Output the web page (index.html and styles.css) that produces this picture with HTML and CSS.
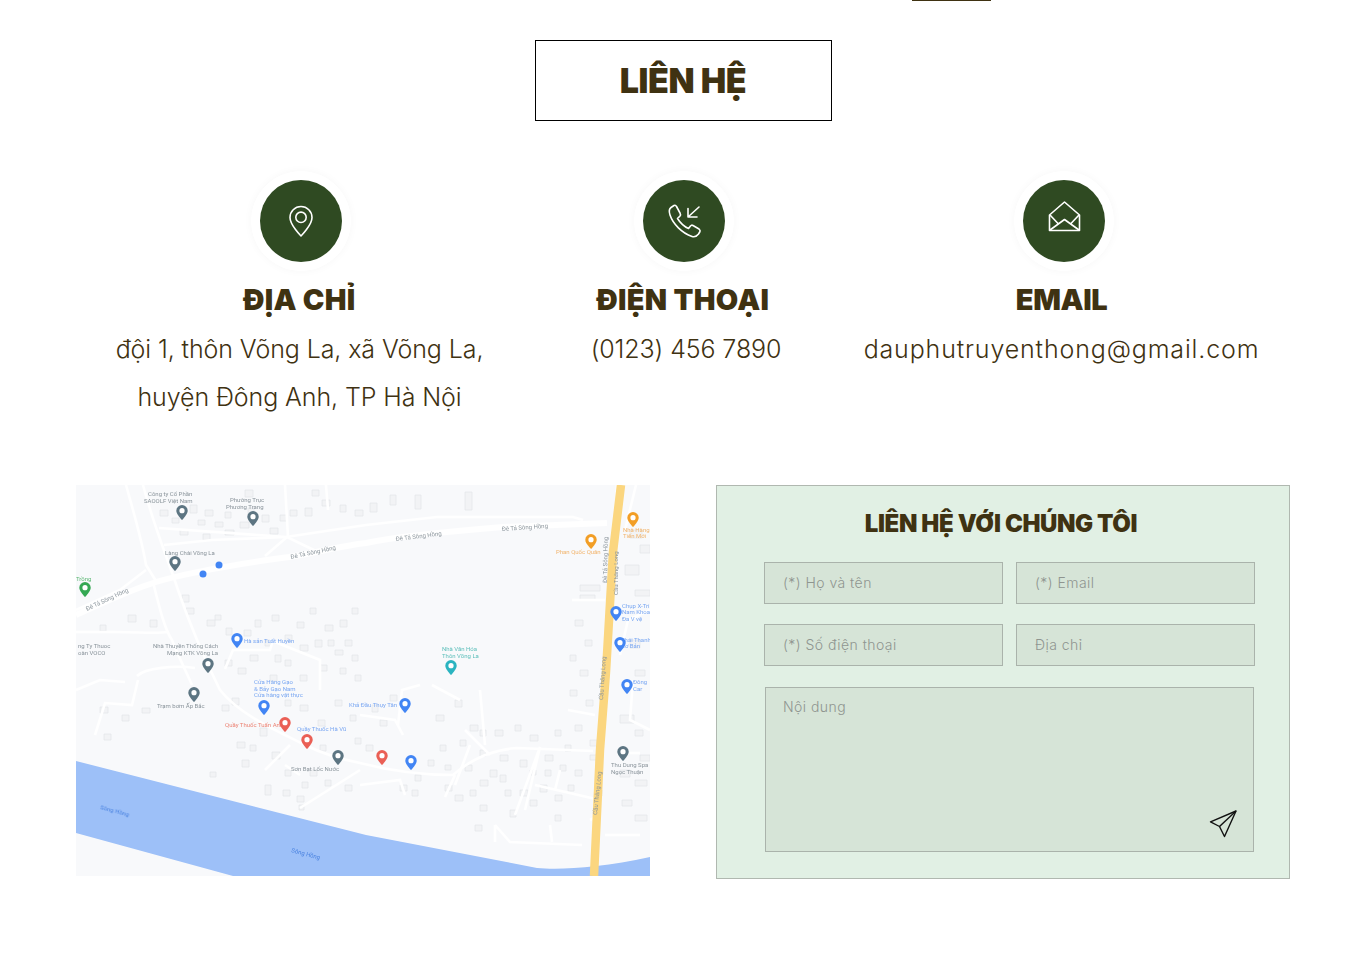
FILE: index.html
```html
<!DOCTYPE html>
<html lang="vi">
<head>
<meta charset="utf-8">
<title>Liên hệ</title>
<link rel="stylesheet" href="styles.css">
</head>
<body>
<div class="nav-line"></div>
<main class="contact">
  <h1 class="page-title">LIÊN HỆ</h1>
  <section class="info-grid">
    <article class="info info-address">
      <div class="badge">
        <svg viewBox="0 0 82 82" class="badge-svg"><circle cx="41" cy="41" r="41" fill="#2f4a22"/><g fill="none" stroke="#fff" stroke-width="1.6" stroke-linejoin="round"><path d="M41 56C41 56 30 45 30 37.5a11 11 0 0 1 22 0C52 45 41 56 41 56Z"/><circle cx="41" cy="37.3" r="5.2"/></g></svg>
      </div>
      <h2>ĐỊA CHỈ</h2>
      <p class="text-address">đội 1, thôn Võng La, xã Võng La,<br>huyện Đông Anh, TP Hà Nội</p>
    </article>
    <article class="info info-phone">
      <div class="badge">
        <svg viewBox="0 0 82 82" class="badge-svg"><circle cx="41" cy="41" r="41" fill="#2f4a22"/><g fill="none" stroke="#fff" stroke-width="1.6" stroke-linejoin="round" stroke-linecap="round"><path d="M31 25.5L28 27.5C26 29 26 32 27 35C30 44 39 53 49 56.5C52 57.5 54 56 55.5 54L57 51.5C57.5 50.5 57 50 56 49L50 45.5C49 45 48 45 47.5 46L45.5 48.5C41 46.5 37 42.5 34.5 38.5L37 36C37.8 35 37.8 34.5 37 33L33.5 26.5C33 25.5 32 25 31 25.5Z"/><path d="M56 27L45 37M45 28.5V37H54"/></g></svg>
      </div>
      <h2>ĐIỆN THOẠI</h2>
      <p class="text-phone">(0123) 456 7890</p>
    </article>
    <article class="info info-email">
      <div class="badge">
        <svg viewBox="0 0 82 82" class="badge-svg"><circle cx="41" cy="41" r="41" fill="#2f4a22"/><g fill="none" stroke="#fff" stroke-width="1.6" stroke-linejoin="round"><path d="M26.5 35L41.5 22L56.5 35V50.5H26.5Z"/><path d="M27 50L41.5 39.5L56 50M27 35L35 43.500M56 35L48 43.500"/></g></svg>
      </div>
      <h2 class="title-email">EMAIL</h2>
      <p class="text-email">dauphutruyenthong@gmail.com</p>
    </article>
  </section>

  <section class="bottom-grid">
    <svg class="map" viewBox="76 485 574 391" role="img" aria-label="Bản đồ Võng La">
      <defs>
        <filter id="soft" x="-5%" y="-5%" width="110%" height="110%"><feGaussianBlur stdDeviation="0.7"/></filter>
        <filter id="softer" x="-5%" y="-5%" width="110%" height="110%"><feGaussianBlur stdDeviation="0.5"/></filter>
        <symbol id="pin" viewBox="0 0 12 15" overflow="visible"><path d="M6 15C6 15 .3 9.500 .3 5.700a5.700 5.700 0 0 1 11.400 0C11.700 9.500 6 15 6 15Z" fill="currentColor"/><circle cx="6" cy="5.700" r="2.600" fill="#fff"/></symbol>
      </defs>
      <rect x="76" y="485" width="574" height="391" fill="#f8f9fb"/>
      <g filter="url(#soft)">
        <path class="block" d="M160 510h8v6h-8zM172 518h7v5h-7zM190 505h7v8h-7zM205 510h8v6h-8zM225 512h6v6h-6zM240 522h9v6h-9zM262 515h7v7h-7zM270 528h8v6h-8zM225 530h9v5h-9zM180 530h8v5h-8zM203 534h7v6h-7zM290 510h7v6h-7zM305 508h7v8h-7zM322 500h8v6h-8zM340 505h6v7h-6zM355 510h8v6h-8zM370 503h7v9h-7zM390 495h6v10h-6zM415 495h6v14h-6zM465 492h7v18h-7zM245 490h8v7h-8zM312 490h7v6h-7zM198 520h7v5h-7zM215 522h8v5h-8zM248 508h6v6h-6zM280 515h7v6h-7z"/>
        <path class="block" d="M182 595h7v7h-7zM186 608h8v6h-8zM207 620h8v6h-8zM215 615h6v5h-6zM226 628h6v7h-6zM244 630h7v6h-7zM255 620h6v7h-6zM272 615h7v6h-7zM297 622h7v6h-7zM310 608h6v6h-6zM325 625h8v6h-8zM340 620h7v7h-7zM352 608h6v6h-6zM250 655h8v6h-8zM275 655h6v7h-6zM300 645h8v6h-8zM315 640h7v7h-7zM335 650h8v5h-8zM352 655h6v6h-6zM225 660h7v6h-7zM238 668h8v6h-8zM128 615h8v7h-8zM150 620h7v7h-7zM100 625h6v6h-6zM285 635h7v6h-7zM265 640h6v6h-6zM328 640h6v6h-6zM345 640h7v6h-7zM285 660h6v6h-6zM320 665h7v6h-7zM340 668h6v6h-6zM300 675h7v6h-7zM355 675h6v6h-6zM270 675h7v6h-7z"/>
        <path class="block" d="M222 705h7v6h-7zM232 698h7v7h-7zM260 728h7v8h-7zM237 742h8v6h-8zM242 760h7v7h-7zM272 752h8v7h-8zM302 782h6v6h-6zM265 785h6v10h-6zM283 790h7v6h-7zM297 796h7v6h-7zM299 805h5v5h-5zM210 772h6v5h-6zM100 707h8v6h-8zM122 715h7v6h-7zM142 708h8v5h-8zM104 734h7v6h-7zM300 705h8v6h-8zM318 720h7v6h-7zM335 700h7v6h-7zM355 738h6v6h-6zM250 745h6v6h-6zM285 770h6v6h-6zM310 770h7v6h-7zM325 780h6v6h-6zM345 785h7v6h-7zM350 715h6v6h-6zM320 745h6v6h-6zM285 700h6v6h-6z"/>
        <path class="block" d="M366 745h7v6h-7zM380 720h7v6h-7zM372 705h6v7h-6zM390 695h7v6h-7zM436 715h8v6h-8zM455 700h7v7h-7zM470 725h8v6h-8zM495 730h8v6h-8zM515 725h6v6h-6zM530 735h8v6h-8zM555 730h6v6h-6zM575 725h7v6h-7zM590 740h7v6h-7zM500 755h8v6h-8zM520 760h7v7h-7zM545 755h8v6h-8zM560 765h6v6h-6zM590 755h8v5h-8zM465 765h7v6h-7zM480 780h8v6h-8zM490 770h7v7h-7zM445 785h7v6h-7zM455 795h8v6h-8zM500 775h6v7h-6zM520 790h8v6h-8zM540 785h7v7h-7zM555 795h7v6h-7zM575 770h7v6h-7zM595 790h7v6h-7zM400 785h7v6h-7zM480 805h7v6h-7zM510 810h6v7h-6zM475 825h7v6h-7zM555 815h6v6h-6zM530 800h7v6h-7zM412 790h6v6h-6zM586 700h7v6h-7zM570 690h7v6h-7zM580 670h8v6h-8zM570 655h6v6h-6zM585 640h7v6h-7zM575 620h8v6h-8zM580 585h20v6h-20zM580 595h15v5h-15zM545 770h6v6h-6zM530 770h6v5h-6zM505 790h6v6h-6zM568 785h6v6h-6zM480 730h6v6h-6zM480 750h6v6h-6zM460 740h6v6h-6zM440 745h6v6h-6zM428 760h6v6h-6zM445 765h6v5h-6zM415 775h6v6h-6zM470 790h6v6h-6zM565 745h6v6h-6z"/>
        <path class="block" d="M630 530h12v8h-12zM640 545h10v8h-10zM625 565h14v10h-14zM635 590h15v6h-15zM630 640h10v8h-10zM635 670h10v6h-10zM620 715h14v8h-14zM635 730h8v6h-8zM620 770h10v7h-10zM635 780h12v6h-12zM622 800h10v6h-10zM635 815h12v6h-12zM640 755h10v6h-10z"/>
        <g class="road-minor">
          <path d="M126 485C133 510 142 540 146 565L156 581"/>
          <path d="M143 485C155 530 170 565 178 590C190 625 205 660 220 690C240 715 275 730 305 745C325 755 345 760 360 763C395 772 430 775 453 775C470 760 490 750 517 748L593 751"/>
          <path d="M159 528L286 537"/>
          <path d="M164 545L212 540L286 537L366 525L437 517L573 517L583 520"/>
          <path d="M265 556L287 537L318 552"/>
          <path d="M285 485L288 537M326 485L328 510"/>
          <path d="M76 610L120 590L146 570"/>
          <path d="M153 582C160 610 165 630 172 640C180 660 190 680 192 685"/>
          <path d="M76 632H115C140 632 155 634 168 632"/>
          <path d="M137 676C145 668 175 665 195 668"/>
          <path d="M76 690L100 680L125 682"/>
          <path d="M95 735L105 703L132 705L138 680"/>
          <path d="M225 669L233 650L270 650L273 640"/>
          <path d="M270 640L320 660L320 690"/>
          <path d="M360 715L395 720L403 735"/>
          <path d="M420 685L402 690L398 725"/>
          <path d="M432 685L460 700"/>
          <path d="M445 797L455 775M515 815L540 747L525 810M470 745L455 785"/>
          <path d="M535 785L600 800M495 825L510 842L582 845M495 842V825M550 825L552 842"/>
          <path d="M555 790L560 770M590 820L600 815"/>
          <path d="M568 710L595 715M633 680L630 720L650 730M650 610L628 620L620 655M605 600H572"/>
          <path d="M300 808L360 770M360 785L400 780L405 795M265 770L290 745M285 765L300 775"/>
          <path d="M480 690L485 745M465 730L490 755"/>
          <path d="M617 485L612 600L602 690L596 790M636 485L625 530"/>
          <path d="M617 753H640M605 835H640"/>
        </g>
        <path class="road-main" d="M76 615C105 602 130 590 156 582C190 572 250 562 289 557C320 552 340 546 366 543C390 538 440 532 503 527L607 523"/>
        <path class="river" d="M76 761L366 835L537 868C560 870 600 868 650 857V876H233L76 833Z"/>
        <path class="highway" d="M621 485L613 552L606 672L600 750L594 876"/>
      </g>
      <g filter="url(#softer)">
        <g class="t-grey">
          <text x="148" y="496">Công ty Cổ Phần</text><text x="144" y="503">SAOOLF Việt Nam</text>
          <text x="230" y="502">Phường Trục</text><text x="226" y="509">Phương Trang</text>
          <text x="165" y="555">Làng Chài Võng La</text>
          <text x="153" y="648">Nhà Thuyền Thống Cách</text><text x="167" y="655">Mạng KTK Võng La</text>
          <text x="78" y="648">ng Ty Thuoc</text><text x="78" y="655">oàn VOCO</text>
          <text x="157" y="708">Trạm bơm Ấp Bắc</text>
          <text x="291" y="771">Sơn Bạt Lốc Nước</text>
          <text x="611" y="767">Thu Dung Spa</text><text x="611" y="774">Ngọc Thuận</text>
          <text transform="translate(87 611) rotate(-25)">Đê Tả Sông Hồng</text>
          <text transform="translate(291 559) rotate(-12)">Đê Tả Sông Hồng</text>
          <text transform="translate(396 541) rotate(-7)">Đê Tả Sông Hồng</text>
          <text transform="translate(502 531) rotate(-4)">Đê Tả Sông Hồng</text>
          <text transform="translate(607 583) rotate(-89)">Đê Tả Sông Hồng</text>
          <text transform="translate(603 700) rotate(-86)">Cầu Thăng Long</text>
          <text transform="translate(597 815) rotate(-84)">Cầu Thăng Long</text>
          <text transform="translate(618 595) rotate(-90)">Cầu Thăng Long</text>
        </g>
        <g class="t-blue">
          <text x="244" y="643">Hà sản Tuất Huyền</text>
          <text x="254" y="684">Cửa Hàng Gạo</text><text x="254" y="691">&amp; Bảy Gạo Nam</text><text x="254" y="697">Cửa hàng vật thực</text>
          <text x="349" y="707">Khả Đầu Thụy Tân</text>
          <text x="297" y="731">Quầy Thuốc Hà Vũ</text>
          <text x="622" y="608">Chụp X-Tri</text><text x="622" y="614">Nam Khoa</text><text x="622" y="621">Đa V vệ</text>
          <text x="621" y="642">Thái Thanh</text><text x="621" y="648">Cơ Bản</text>
          <text x="633" y="684">Đông</text><text x="633" y="691">Car</text>
        </g>
        <text class="t-red" x="225" y="727">Quầy Thuốc Tuấn Anh</text>
        <g class="t-orange"><text x="556" y="554">Phan Quốc Quân</text><text x="623" y="532">Nhà Hàng</text><text x="623" y="538">Tiến Mới</text></g>
        <g class="t-teal"><text x="442" y="651">Nhà Văn Hóa</text><text x="442" y="658">Thôn Võng La</text></g>
        <text class="t-green" x="76" y="581">Trồng</text>
        <g class="t-water">
          <text transform="translate(100 809) rotate(15)">Sông Hồng</text>
          <text transform="translate(291 852) rotate(15)">Sông Hồng</text>
        </g>
        <use href="#pin" x="176" y="505" width="12" height="15" class="p-grey"/>
        <use href="#pin" x="247" y="511" width="12" height="15" class="p-grey"/>
        <use href="#pin" x="169" y="556" width="12" height="15" class="p-grey"/>
        <use href="#pin" x="202" y="658" width="12" height="15" class="p-grey"/>
        <use href="#pin" x="188" y="687" width="12" height="15" class="p-grey"/>
        <use href="#pin" x="332" y="750" width="12" height="15" class="p-grey"/>
        <use href="#pin" x="617" y="746" width="12" height="15" class="p-grey"/>
        <use href="#pin" x="231" y="633" width="12" height="15" class="p-blue"/>
        <use href="#pin" x="258" y="700" width="12" height="15" class="p-blue"/>
        <use href="#pin" x="399" y="698" width="12" height="15" class="p-blue"/>
        <use href="#pin" x="405" y="755" width="12" height="15" class="p-blue"/>
        <use href="#pin" x="610" y="606" width="12" height="15" class="p-blue"/>
        <use href="#pin" x="614" y="637" width="12" height="15" class="p-blue"/>
        <use href="#pin" x="621" y="679" width="12" height="15" class="p-blue"/>
        <use href="#pin" x="279" y="717" width="12" height="15" class="p-red"/>
        <use href="#pin" x="301" y="734" width="12" height="15" class="p-red"/>
        <use href="#pin" x="376" y="750" width="12" height="15" class="p-red"/>
        <use href="#pin" x="627" y="512" width="12" height="15" class="p-orange"/>
        <use href="#pin" x="585" y="534" width="12" height="15" class="p-orange"/>
        <use href="#pin" x="445" y="660" width="12" height="15" class="p-teal"/>
        <use href="#pin" x="79" y="582" width="12" height="15" class="p-green"/>
        <circle cx="219" cy="565" r="3.500" fill="#4285f4"/>
        <circle cx="203" cy="574" r="3.500" fill="#4285f4"/>
      </g>
    </svg>

    <form class="contact-form">
      <h3>LIÊN HỆ VỚI CHÚNG TÔI</h3>
      <div class="fields">
        <input type="text" placeholder="(*) Họ và tên">
        <input type="text" placeholder="(*) Email">
        <input type="text" placeholder="(*) Số điện thoại">
        <input type="text" placeholder="Địa chỉ">
      </div>
      <div class="message">
        <textarea placeholder="Nội dung"></textarea>
        <button type="button" class="send" aria-label="Gửi">
          <svg viewBox="0 0 30 30" width="30" height="30" fill="none" stroke="#111" stroke-width="1.400" stroke-linejoin="round"><path d="M28 2L2.500 12.800L11.500 17.500L16.500 27.500Z"/><path d="M28 2L11.500 17.500"/></svg>
        </button>
      </div>
    </form>
  </section>
</main>
</body>
</html>
```

FILE: styles.css
```css
* { box-sizing: border-box; }
html, body { margin: 0; padding: 0; background: #fff; }
body {
  font-family: "Inter", "Liberation Sans", sans-serif;
  color: #3f3212;
  min-height: 955px;
}
.nav-line {
  width: 79px;
  height: 1px;
  margin-left: 912px;
  background: #3f3212;
}
.contact {
  width: 1214px;
  margin: 0 auto;
  padding-top: 39px;
}
.page-title {
  width: 297px;
  height: 81px;
  margin: 0 auto;
  border: 1px solid #000;
  font-size: 34px;
  font-weight: 900;
  letter-spacing: -.4px;
  line-height: 79px;
  text-align: center;
}
.info-grid {
  display: grid;
  grid-template-columns: 447px 320px 437px;
  margin-top: 50px;
}
.info { display: flex; flex-direction: column; align-items: center; }
.badge {
  width: 100px;
  height: 100px;
  padding: 9px;
  border-radius: 50%;
  background: #fff;
  box-shadow: 0 0 8px rgba(0, 0, 0, .035);
}
.info-address .badge { margin-left: 2px; }
.info-phone .badge { margin-left: 2px; }
.info-email .badge { margin-left: 5px; }
.badge-svg { display: block; width: 82px; height: 82px; }
.info h2 {
  margin: 9px 0 0;
  font-size: 29px;
  font-weight: 900;
  letter-spacing: .3px;
  line-height: 40px;
}
.info .title-email { letter-spacing: -.4px; }
.info p {
  margin: 5px 0 0;
  font-size: 25px;
  font-weight: 300;
  line-height: 48px;
  text-align: center;
  white-space: nowrap;
}
.info .text-address { letter-spacing: -.1px; }
.info .text-phone { margin-left: 6px; letter-spacing: -.1px; }
.info .text-email { letter-spacing: .85px; }
.bottom-grid {
  display: grid;
  grid-template-columns: 574px 574px;
  justify-content: space-between;
  align-items: start;
  margin-top: 64px;
}
.map { display: block; width: 574px; height: 391px; }
.block { fill: #f2f3f5; stroke: #e4e6ea; stroke-width: .8; }
.road-minor path { fill: none; stroke: #fff; stroke-width: 2.6; }
.road-main { fill: none; stroke: #fff; stroke-width: 6; }
.river { fill: #9dc0f8; }
.highway { fill: none; stroke: #fbd67f; stroke-width: 8.500; }
.map text { font-family: "Roboto", sans-serif; font-size: 6px; }
.t-grey text { fill: #8a949b; }
.t-blue text { fill: #7aa7f2; }
.t-red { fill: #ec8374; }
.t-orange text { fill: #f2b46c; }
.t-teal text { fill: #5cbfba; }
.t-green { fill: #5cb874; }
.t-water text { fill: #4a82e0; }
.p-grey { color: #5d7582; }
.p-blue { color: #4285f4; }
.p-red { color: #ea5f55; }
.p-orange { color: #f29e25; }
.p-teal { color: #2cb4c0; }
.p-green { color: #34a853; }
.contact-form {
  height: 394px;
  padding: 20px 34px 0 47px;
  background: #e1f0e4;
  border: 1px solid #b0b8b0;
}
.contact-form h3 {
  margin: 0 0 21px;
  padding-right: 17px;
  font-size: 24px;
  font-weight: 900;
  letter-spacing: -.4px;
  line-height: 35px;
  text-align: center;
}
.fields {
  display: grid;
  grid-template-columns: 239px 239px;
  column-gap: 13px;
  row-gap: 20px;
}
.fields input, .message textarea {
  display: block;
  width: 100%;
  background: #d6e4d7;
  border: 1px solid #aab3ab;
  border-radius: 0;
  outline: none;
  font-family: "Inter", "Liberation Sans", sans-serif;
  font-size: 14px;
  font-weight: 300;
  letter-spacing: .45px;
  color: #3f3212;
  padding: 0 18px;
}
.fields input { height: 42px; padding-bottom: 2px; }
.fields input::placeholder, .message textarea::placeholder { color: #8f9590; opacity: 1; }
.message {
  position: relative;
  width: 489px;
  margin: 21px 0 0 1px;
}
.message textarea {
  height: 165px;
  padding: 10px 17px;
  resize: none;
}
.send {
  position: absolute;
  right: 16px;
  bottom: 13px;
  padding: 0;
  border: 0;
  background: none;
  width: 30px;
  height: 30px;
}
.send svg { display: block; }
```
